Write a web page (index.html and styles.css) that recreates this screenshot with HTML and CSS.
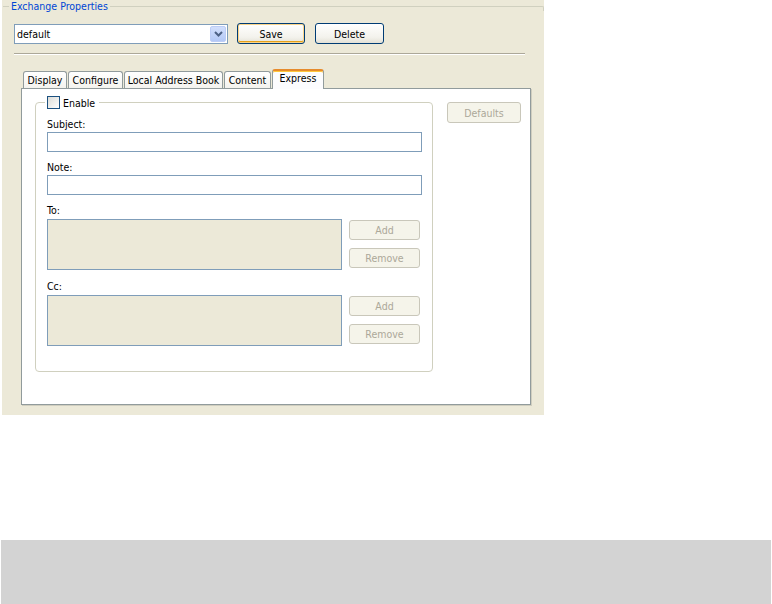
FILE: index.html
```html
<!DOCTYPE html>
<html lang="en">
<head>
  <meta charset="UTF-8">
  <title>Exchange Properties</title>
  <link rel="stylesheet" href="styles.css">
</head>
<body>
  <div class="prefs">
    <div class="group-title"><span>Exchange Properties</span></div>

    <div class="profile-row">
      <div class="combo">
        <span class="combo-text">default</span>
        <span class="combo-btn">
          <svg width="9" height="6" viewBox="0 0 9 6"><path d="M1 1 L4.5 4.5 L8 1" fill="none" stroke="#4D6185" stroke-width="2"/></svg>
        </span>
      </div>
      <button class="btn btn-default">Save</button>
      <button class="btn btn-delete">Delete</button>
    </div>

    <div class="separator"></div>

    <div class="tabs">
      <div class="tab tab-display">Display</div>
      <div class="tab tab-configure">Configure</div>
      <div class="tab tab-book">Local Address Book</div>
      <div class="tab tab-content">Content</div>
      <div class="tab tab-express active">Express</div>
    </div>

    <div class="tab-panel">
      <div class="group">
        <div class="group-head">
          <span class="checkbox"></span>
          <span>Enable</span>
        </div>

        <div class="label label-subject">Subject:</div>
        <div class="text-field"></div>

        <div class="label label-note">Note:</div>
        <div class="text-field"></div>

        <div class="label label-to">To:</div>
        <div class="list-row">
          <div class="list-box"></div>
          <div class="list-buttons">
            <button class="btn btn-disabled">Add</button>
            <button class="btn btn-disabled">Remove</button>
          </div>
        </div>

        <div class="label label-cc">Cc:</div>
        <div class="list-row">
          <div class="list-box"></div>
          <div class="list-buttons">
            <button class="btn btn-disabled">Add</button>
            <button class="btn btn-disabled">Remove</button>
          </div>
        </div>
      </div>

      <button class="btn btn-disabled btn-defaults">Defaults</button>
    </div>
  </div>

  <div class="status-bar"></div>
</body>
</html>
```

FILE: styles.css
```css
body {
  margin: 0;
  background-color: #fff;
  font-family: "DejaVu Sans Condensed", "DejaVu Sans", sans-serif;
  font-stretch: condensed;
  font-size: 10.5px;
  color: #000;
}

.prefs {
  width: 542px;
  height: 415px;
  margin-left: 2px;
  background-color: #ECE9D8;
  overflow: hidden;
}

.group-title {
  display: flex;
  align-items: center;
  height: 13px;
  margin-left: 1px;
}

.group-title::before {
  content: "";
  width: 6px;
  border-top: 1px solid #D0D0BF;
}

.group-title span {
  padding: 0 2px;
  color: #0046D5;
  line-height: 13px;
}

.group-title::after {
  content: "";
  flex: 1;
  align-self: flex-start;
  height: 4px;
  margin-top: 6px;
  border-top: 1px solid #D0D0BF;
  border-right: 1px solid #D0D0BF;
  border-top-right-radius: 2px;
}

.profile-row {
  display: flex;
  align-items: flex-start;
  margin-top: 10px;
  padding-left: 12px;
}

.combo {
  display: flex;
  align-items: center;
  box-sizing: border-box;
  width: 214px;
  height: 20px;
  margin-top: 1px;
  border: 1px solid #7F9DB9;
  background-color: #fff;
}

.combo-text {
  flex: 1;
  padding-left: 2px;
}

.combo-btn {
  display: flex;
  align-items: center;
  justify-content: center;
  box-sizing: border-box;
  width: 16px;
  height: 16px;
  margin-right: 1px;
  border: 1px solid #BCCDF6;
  border-radius: 2px;
  background: linear-gradient(#D2DFFC, #B3C8F6);
}

.btn {
  box-sizing: border-box;
  height: 21px;
  padding: 0;
  border: 1px solid #003C74;
  border-radius: 3px;
  background: linear-gradient(#FFFFFF, #F3F2EC 70%, #E3E1D6);
  font-family: inherit;
  font-stretch: condensed;
  font-size: 10.5px;
  color: #000;
}

.btn-default {
  width: 68px;
  margin-left: 9px;
  box-shadow: inset 0 0 0 1px #FBD58A, inset 0 -1px 0 1px #E5A01A;
}

.btn-delete {
  width: 69px;
  margin-left: 10px;
}

.btn-disabled {
  border-color: #C9C7BA;
  background: #F5F4EA;
  color: #ACA899;
}

.separator {
  width: 511px;
  margin: 9px 0 0 12px;
  border-top: 1px solid #ACA899;
  border-bottom: 1px solid #fff;
}

.tabs {
  position: relative;
  display: flex;
  align-items: flex-end;
  gap: 1px;
  height: 20px;
  margin: 14px 0 -1px 21px;
}

.tab {
  box-sizing: border-box;
  height: 17px;
  margin-bottom: 1px;
  border: 1px solid #919B9C;
  border-bottom: none;
  border-radius: 3px 3px 0 0;
  background: linear-gradient(#FFFFFF, #F4F3EE);
  text-align: center;
  white-space: nowrap;
  line-height: 16px;
}

.tab.active {
  height: 20px;
  margin-bottom: 0;
  border-top: 2px solid #E68B2C;
  background: #FCFCFE;
  box-shadow: inset 0 1px 0 #FFC83C;
  line-height: 15px;
}

.tab-display { width: 44px; }
.tab-configure { width: 55px; }
.tab-book { width: 99px; }
.tab-content { width: 47px; }
.tab-express { width: 52px; }

.tab-panel {
  display: flex;
  align-items: flex-start;
  box-sizing: border-box;
  width: 510px;
  height: 317px;
  margin-left: 19px;
  padding: 13px 0 0 13px;
  border: 1px solid #919B9C;
  background-color: #fff;
  box-shadow: 1px 1px 0 #D0CEBF;
}

.group {
  box-sizing: border-box;
  width: 398px;
  height: 270px;
  padding-left: 11px;
  border: 1px solid #D0D0BF;
  border-radius: 4px;
}

.group-head {
  display: flex;
  align-items: center;
  gap: 3px;
  width: fit-content;
  height: 13px;
  margin: -7px 0 0 -2px;
  padding: 0 4px 0 2px;
  background-color: #fff;
}

.checkbox {
  box-sizing: border-box;
  width: 13px;
  height: 13px;
  border: 1px solid #1C5180;
  background: linear-gradient(135deg, #DCDCD7, #FFFFFF);
}

.label {
  line-height: 13px;
}

.label-subject { margin-top: 9px; }
.label-note { margin-top: 9px; }
.label-to { margin-top: 9px; }
.label-cc { margin-top: 10px; }

.text-field {
  box-sizing: border-box;
  width: 375px;
  height: 20px;
  margin-top: 1px;
  border: 1px solid #7F9DB9;
  background-color: #fff;
}

.list-row {
  display: flex;
  align-items: flex-start;
  gap: 7px;
  margin-top: 2px;
}

.list-box {
  box-sizing: border-box;
  width: 295px;
  height: 51px;
  border: 1px solid #7F9DB9;
  background-color: #ECE9D8;
}

.list-buttons {
  display: flex;
  flex-direction: column;
  gap: 8px;
  padding-top: 1px;
}

.list-buttons .btn {
  width: 71px;
  height: 20px;
}

.btn-defaults {
  width: 74px;
  margin-left: 14px;
}

.status-bar {
  height: 64px;
  margin: 125px 1px 0 1px;
  background-color: #D3D3D3;
}
```
